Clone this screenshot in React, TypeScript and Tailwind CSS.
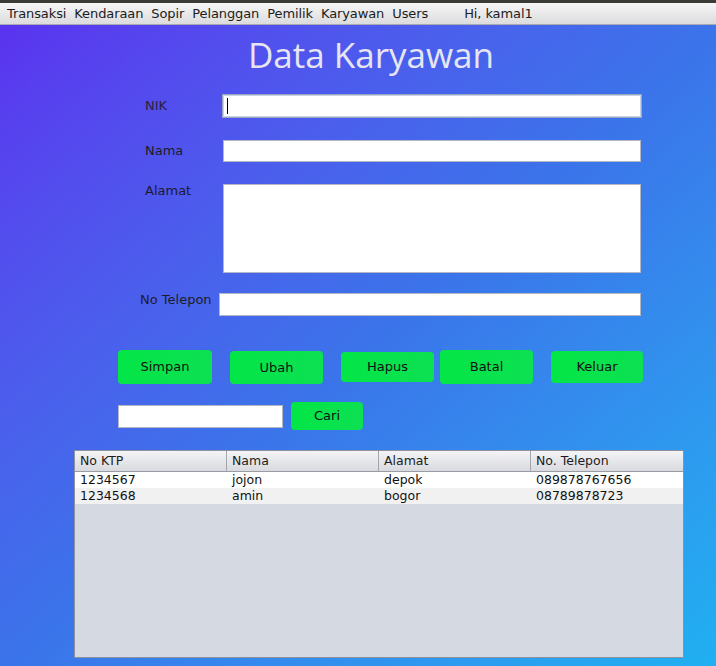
const menus = ["Transaksi", "Kendaraan", "Sopir", "Pelanggan", "Pemilik", "Karyawan", "Users"];

const rows = [
  ["1234567", "jojon", "depok", "089878767656"],
  ["1234568", "amin", "bogor", "08789878723"],
];

function GreenButton({ label, className }: { label: string; className: string }) {
  return (
    <button
      className={
        "rounded-[4px] bg-gradient-to-r from-[#03e646] to-[#0de052] text-[13px] text-[#111] " + className
      }
    >
      {label}
    </button>
  );
}

export default function App() {
  return (
    <div className="h-[666px] w-[716px] overflow-hidden font-['DejaVu_Sans',sans-serif]">
      <div className="h-[3px] bg-[#3c3b37]" />
      <div className="flex h-[22px] items-center border-b border-[#a9aab0] bg-gradient-to-b from-[#f6f6f6] to-[#dcdcde] pl-[7px] text-[13px] tracking-[-0.1px] text-[#1c1c1c]">
        {menus.map((m) => (
          <span key={m} className="mr-[8px]">
            {m}
          </span>
        ))}
        <span className="ml-[28px]">Hi, kamal1</span>
      </div>

      <div className="h-[641px] bg-gradient-to-br from-[#5a32ef] via-[#3b73ea] to-[#1fb0f1] pt-[8px]">
        <h1 className="pl-[26px] text-center font-['Open_Sans',sans-serif] text-[35px] leading-[44px] text-[#e6e6f2]">
          Data Karyawan
        </h1>

        <div className="mt-[17px] flex items-center">
          <label className="ml-[145px] w-[77px] text-[13px] text-[#2a2040]">NIK</label>
          <div className="flex h-[24px] w-[420px] items-center border border-[#9aa6c0] bg-white pl-[4px] shadow-[inset_0_0_0_1px_#c9d3e6]">
            <span className="h-[16px] w-px bg-black" />
          </div>
        </div>

        <div className="mt-[22px] flex items-center">
          <label className="ml-[145px] w-[78px] text-[13px] text-[#1c1c2a]">Nama</label>
          <div className="h-[22px] w-[418px] border border-[#b4b8c4] bg-white" />
        </div>

        <div className="mt-[22px] flex items-start">
          <label className="ml-[145px] mt-[-3px] w-[78px] text-[13px] text-[#1c1c2a]">Alamat</label>
          <div className="h-[89px] w-[418px] border border-[#b4b8c4] bg-white" />
        </div>

        <div className="mt-[20px] flex items-start">
          <label className="ml-[140px] mt-[-3px] w-[79px] text-[13px] text-[#1c1c2a]">No Telepon</label>
          <div className="h-[23px] w-[422px] border border-[#b4b8c4] bg-white" />
        </div>

        <div className="ml-[118px] mt-[34px] flex items-start">
          <GreenButton label="Simpan" className="h-[34px] w-[94px]" />
          <GreenButton label="Ubah" className="ml-[18px] mt-px h-[33px] w-[93px]" />
          <GreenButton label="Hapus" className="ml-[18px] mt-[2px] h-[30px] w-[93px]" />
          <GreenButton label="Batal" className="ml-[6px] h-[34px] w-[93px]" />
          <GreenButton label="Keluar" className="ml-[18px] mt-px h-[32px] w-[92px]" />
        </div>

        <div className="ml-[118px] mt-[18px] flex items-center">
          <div className="h-[23px] w-[165px] border border-[#b4b8c4] bg-white" />
          <GreenButton label="Cari" className="ml-[8px] h-[28px] w-[72px]" />
        </div>

        <div className="ml-[74px] mt-[20px] flex h-[208px] w-[610px] flex-col border border-[#8d929e] bg-[#d5d9e2]">
          <div className="grid h-[21px] grid-cols-4 border-b border-[#9a9ca4] bg-gradient-to-b from-[#f4f4f6] to-[#d9dadf] text-[12.5px] text-[#1c1c1c]">
            {["No KTP", "Nama", "Alamat", "No. Telepon"].map((h, i) => (
              <div
                key={h}
                className={"flex items-center pl-[5px] " + (i < 3 ? "border-r border-[#a4a6ae]" : "")}
              >
                {h}
              </div>
            ))}
          </div>
          {rows.map((r, ri) => (
            <div
              key={ri}
              className={"grid h-[16px] grid-cols-4 text-[12.5px] leading-[16px] text-[#111] " + (ri === 0 ? "bg-white" : "bg-[#f1f1f2]")}
            >
              {r.map((c, ci) => (
                <div key={ci} className="pl-[5px]">
                  {c}
                </div>
              ))}
            </div>
          ))}
        </div>
      </div>
    </div>
  );
}
